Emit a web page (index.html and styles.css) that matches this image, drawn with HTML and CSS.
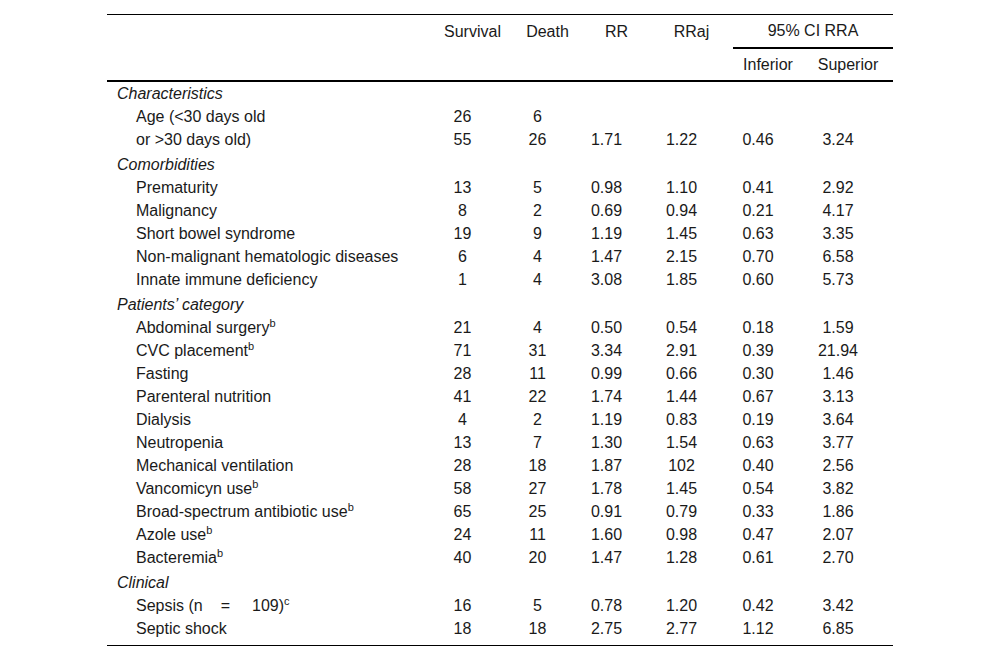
FILE: index.html
```html
<!DOCTYPE html>
<html>
<head>
<meta charset="utf-8">
<link rel="stylesheet" href="styles.css">
</head>
<body>
<table class="tbl">
  <colgroup>
    <col class="c-label"><col class="c-surv"><col class="c-death"><col class="c-rr"><col class="c-rraj"><col class="c-inf"><col class="c-sup">
  </colgroup>
  <thead>
    <tr class="h1">
      <th></th><th>Survival</th><th>Death</th><th>RR</th><th>RRaj</th><th colspan="2" class="ci">95% CI RRA</th>
    </tr>
    <tr class="h2">
      <th></th><th></th><th></th><th></th><th></th><th>Inferior</th><th>Superior</th>
    </tr>
  </thead>
  <tbody>
    <tr class="cat first"><td colspan="7">Characteristics</td></tr>
    <tr><td>Age (&lt;30 days old</td><td>26</td><td>6</td><td></td><td></td><td></td><td></td></tr>
    <tr><td>or &gt;30 days old)</td><td>55</td><td>26</td><td>1.71</td><td>1.22</td><td>0.46</td><td>3.24</td></tr>
    <tr class="cat"><td colspan="7">Comorbidities</td></tr>
    <tr><td>Prematurity</td><td>13</td><td>5</td><td>0.98</td><td>1.10</td><td>0.41</td><td>2.92</td></tr>
    <tr><td>Malignancy</td><td>8</td><td>2</td><td>0.69</td><td>0.94</td><td>0.21</td><td>4.17</td></tr>
    <tr><td>Short bowel syndrome</td><td>19</td><td>9</td><td>1.19</td><td>1.45</td><td>0.63</td><td>3.35</td></tr>
    <tr><td>Non-malignant hematologic diseases</td><td>6</td><td>4</td><td>1.47</td><td>2.15</td><td>0.70</td><td>6.58</td></tr>
    <tr><td>Innate immune deficiency</td><td>1</td><td>4</td><td>3.08</td><td>1.85</td><td>0.60</td><td>5.73</td></tr>
    <tr class="cat"><td colspan="7">Patients’ category</td></tr>
    <tr><td>Abdominal surgery<sup>b</sup></td><td>21</td><td>4</td><td>0.50</td><td>0.54</td><td>0.18</td><td>1.59</td></tr>
    <tr><td>CVC placement<sup>b</sup></td><td>71</td><td>31</td><td>3.34</td><td>2.91</td><td>0.39</td><td>21.94</td></tr>
    <tr><td>Fasting</td><td>28</td><td>11</td><td>0.99</td><td>0.66</td><td>0.30</td><td>1.46</td></tr>
    <tr><td>Parenteral nutrition</td><td>41</td><td>22</td><td>1.74</td><td>1.44</td><td>0.67</td><td>3.13</td></tr>
    <tr><td>Dialysis</td><td>4</td><td>2</td><td>1.19</td><td>0.83</td><td>0.19</td><td>3.64</td></tr>
    <tr><td>Neutropenia</td><td>13</td><td>7</td><td>1.30</td><td>1.54</td><td>0.63</td><td>3.77</td></tr>
    <tr><td>Mechanical ventilation</td><td>28</td><td>18</td><td>1.87</td><td>102</td><td>0.40</td><td>2.56</td></tr>
    <tr><td>Vancomicyn use<sup>b</sup></td><td>58</td><td>27</td><td>1.78</td><td>1.45</td><td>0.54</td><td>3.82</td></tr>
    <tr><td>Broad-spectrum antibiotic use<sup>b</sup></td><td>65</td><td>25</td><td>0.91</td><td>0.79</td><td>0.33</td><td>1.86</td></tr>
    <tr><td>Azole use<sup>b</sup></td><td>24</td><td>11</td><td>1.60</td><td>0.98</td><td>0.47</td><td>2.07</td></tr>
    <tr><td>Bacteremia<sup>b</sup></td><td>40</td><td>20</td><td>1.47</td><td>1.28</td><td>0.61</td><td>2.70</td></tr>
    <tr class="cat"><td colspan="7">Clinical</td></tr>
    <tr><td>Sepsis (n<span class="gap1"></span>=<span class="gap2"></span>109)<sup>c</sup></td><td>16</td><td>5</td><td>0.78</td><td>1.20</td><td>0.42</td><td>3.42</td></tr>
    <tr class="last"><td>Septic shock</td><td>18</td><td>18</td><td>2.75</td><td>2.77</td><td>1.12</td><td>6.85</td></tr>
  </tbody>
</table>
</body>
</html>
```
FILE: styles.css
```css
html, body {
  margin: 0;
  padding: 0;
  background: #fff;
}

body {
  padding-top: 14px;
}

.tbl {
  width: 786px;
  margin: 0 auto;
  table-layout: fixed;
  border-collapse: separate;
  border-spacing: 0;
  font-family: "Liberation Sans", Arial, sans-serif;
  font-size: 16px;
  color: #1a1a1a;
  border-top: 1px solid #000;
}

.c-label { width: 326px; }
.c-surv { width: 79px; }
.c-death { width: 71px; }
.c-rr { width: 67px; }
.c-rraj { width: 83px; }
.c-inf { width: 70px; }
.c-sup { width: 90px; }

.tbl th {
  font-weight: normal;
  text-align: center;
  padding: 0;
  vertical-align: middle;
}

.h1 th {
  height: 32px;
}

.h1 th.ci {
  border-bottom: 2px solid #000;
}

.h2 th {
  height: 31px;
  border-bottom: 2px solid #000;
}

.tbl td {
  height: 23px;
  padding: 0 20px 0 0;
  text-align: center;
  vertical-align: middle;
  white-space: nowrap;
}

.tbl td:first-child {
  text-align: left;
  padding: 0 0 0 29px;
}

.tbl .cat td {
  font-style: italic;
  height: 23px;
  padding-top: 2px;
}

.tbl .cat td:first-child {
  padding-left: 10px;
}

.tbl .cat.first td {
  padding-top: 0;
}

.tbl .last td {
  height: 23px;
  padding-bottom: 5px;
  border-bottom: 1px solid #000;
}

.tbl sup {
  font-size: 11px;
  line-height: 0;
  vertical-align: 6px;
}

.gap1 {
  display: inline-block;
  width: 18px;
}

.gap2 {
  display: inline-block;
  width: 22px;
}
```
